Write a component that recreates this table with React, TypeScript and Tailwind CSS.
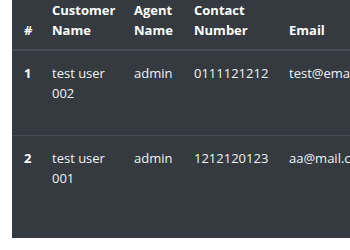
import React from "react";

const rows = [
  { id: "1", name: ["test user", "002"], agent: "admin", phone: "0111121212", email: "test@email.com" },
  { id: "2", name: ["test user", "001"], agent: "admin", phone: "1212120123", email: "aa@mail.com" },
];

export default function App() {
  return (
    <div className="w-[350px] h-[250px] overflow-hidden bg-white pl-[12px]" style={{ fontFamily: '"Open Sans", "Noto Sans", sans-serif' }}>
      <div className="h-full w-[500px] bg-[#343a40] text-white text-[13px] leading-[20px]">
        <div className="-mt-[12px] grid grid-cols-[28px_82px_60px_95px_1fr] border-b-2 border-[#454d55] font-bold">
          <div className="px-[12px] pt-[12px] pb-[9px] flex items-end">#</div>
          <div className="px-[12px] pt-[12px] pb-[9px]">Customer<br />Name</div>
          <div className="px-[12px] pt-[12px] pb-[9px]">Agent<br />Name</div>
          <div className="px-[12px] pt-[12px] pb-[9px]">Contact<br />Number</div>
          <div className="px-[12px] pt-[12px] pb-[9px] flex items-end">Email</div>
        </div>
        {rows.map((r, i) => (
          <div key={r.id} className={`grid grid-cols-[28px_82px_60px_95px_1fr] h-[84px] ${i > 0 ? "border-t border-[#454d55]" : ""}`}>
            <div className="px-[12px] pt-[12px] font-bold">{r.id}</div>
            <div className="px-[12px] pt-[12px] text-[#f1f3f5]">{r.name[0]}<br />{r.name[1]}</div>
            <div className="px-[12px] pt-[12px] text-[#f1f3f5]">{r.agent}</div>
            <div className="px-[12px] pt-[12px] text-[#f1f3f5]">{r.phone}</div>
            <div className="px-[12px] pt-[12px] text-[#f1f3f5] whitespace-nowrap">{r.email}</div>
          </div>
        ))}
      </div>
    </div>
  );
}
